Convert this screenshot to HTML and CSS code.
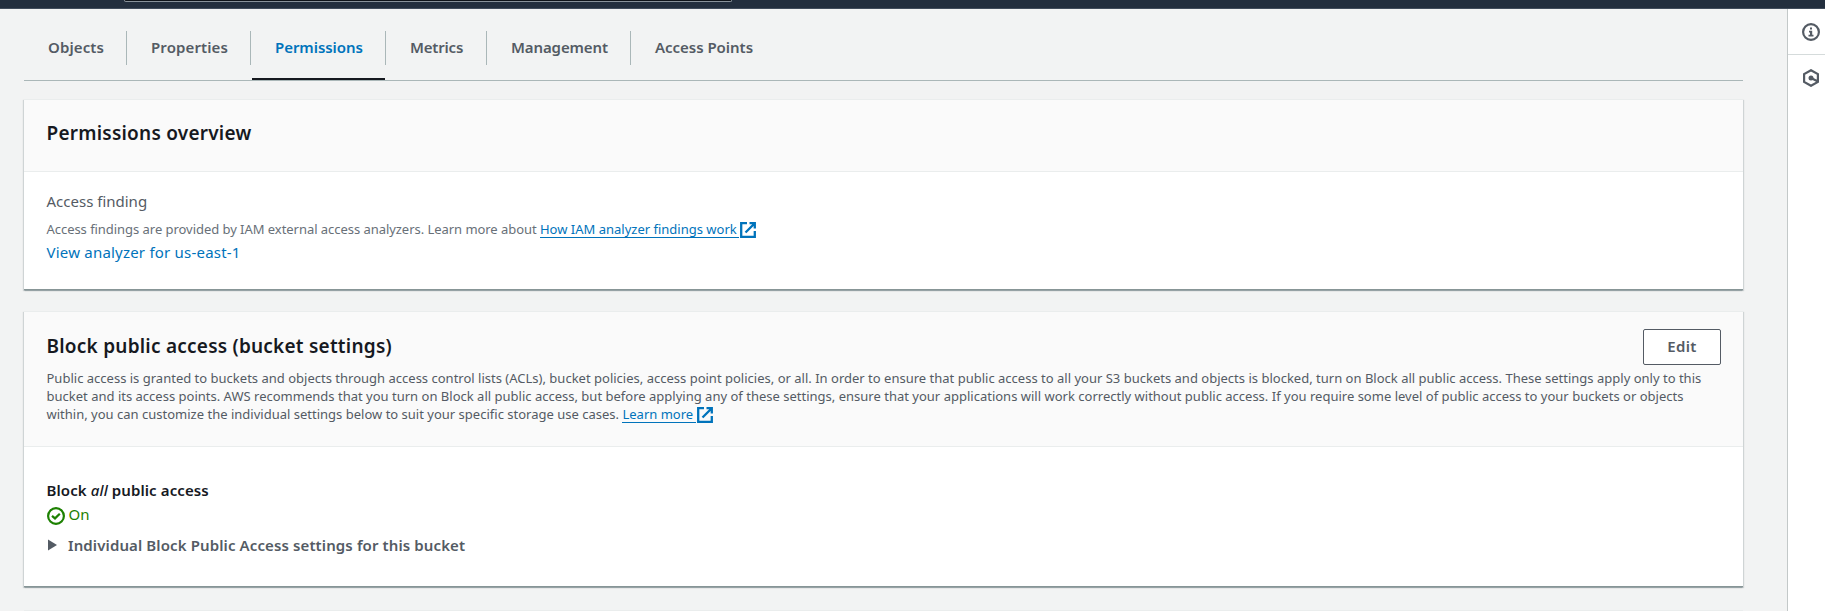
FILE: index.html
```html
<!DOCTYPE html>
<html lang="en">
<head>
<meta charset="utf-8">
<title>Bucket permissions</title>
<link rel="stylesheet" href="styles.css">
</head>
<body>
<header class="topbar"><div class="search"></div></header>
<div class="layout">
  <main class="content">
    <nav class="tabs">
      <a class="tab tab-objects"><span>Objects</span></a>
      <a class="tab tab-properties"><span>Properties</span></a>
      <a class="tab tab-permissions active"><span>Permissions</span></a>
      <a class="tab tab-metrics"><span>Metrics</span></a>
      <a class="tab tab-management"><span>Management</span></a>
      <a class="tab tab-points"><span>Access Points</span></a>
    </nav>

    <section class="card overview">
      <div class="card-header"><h2>Permissions overview</h2></div>
      <div class="card-body">
        <div class="label">Access finding</div>
        <p class="hint">Access findings are provided by IAM external access analyzers. Learn more about <a class="link">How IAM analyzer findings work <svg class="external" viewBox="0 0 16 16"><path d="M7 1.2H1.2v13.6h13.6V9M9.5 1.2h5.3v5.3M5.5 10.5l9-9"/></svg></a></p>
        <a class="plain-link">View analyzer for us-east-1</a>
      </div>
    </section>

    <section class="card block">
      <div class="card-header">
        <div class="heading-row">
          <h2>Block public access (bucket settings)</h2>
          <button class="button">Edit</button>
        </div>
        <p class="description">Public access is granted to buckets and objects through access control lists (ACLs), bucket policies, access point policies, or all. In order to ensure that public access to all your S3 buckets and objects is blocked, turn on Block all public access. These settings apply only to this<br>bucket and its access points. AWS recommends that you turn on Block all public access, but before applying any of these settings, ensure that your applications will work correctly without public access. If you require some level of public access to your buckets or objects<br>within, you can customize the individual settings below to suit your specific storage use cases. <a class="link">Learn more <svg class="external" viewBox="0 0 16 16"><path d="M7 1.2H1.2v13.6h13.6V9M9.5 1.2h5.3v5.3M5.5 10.5l9-9"/></svg></a></p>
      </div>
      <div class="card-body">
        <h3>Block <em>all</em> public access</h3>
        <div class="status">
          <svg class="check" viewBox="0 0 18 18"><circle cx="9" cy="9" r="7.9"/><path d="M5 8.8l3 2.6 4.8-4.6"/></svg>
          <span>On</span>
        </div>
        <div class="expander">
          <svg class="caret" viewBox="0 0 9 12"><path d="M0 .5v11L9 6z"/></svg>
          <span>Individual Block Public Access settings for this bucket</span>
        </div>
      </div>
    </section>

    <section class="card next"></section>
  </main>
  <aside class="tools">
    <div class="tool"><svg viewBox="0 0 18 18"><circle cx="9" cy="9" r="7.9"/><path class="fill" d="M8 4.6h2v2H8zM7 7.8h3.2v4h1.3v1.7h-5v-1.7H8V9.5H7z"/></svg></div>
    <div class="tool"><svg viewBox="0 0 18 18"><path d="M9 1.2l6.9 3.9v7.8L9 16.8l-6.9-3.9V5.1zM9 9l6.5 3.3"/><circle class="fill" cx="9" cy="9" r="2.5"/></svg></div>
  </aside>
</div>
</body>
</html>
```
FILE: styles.css
```css
* { box-sizing: border-box; }
body {
  margin: 0;
  height: 611px;
  overflow: hidden;
  display: flex;
  flex-direction: column;
  background: #f2f3f3;
  color: #16191f;
  font: 15px/22px "Noto Sans", sans-serif;
}
h2, h3, p { margin: 0; }

.topbar {
  height: 9px;
  flex: none;
  padding-left: 124px;
  background: #232f3e;
  border-bottom: 1px solid #414d5c;
}
.search {
  width: 608px;
  height: 2px;
  background: #0f141a;
  border: 1px solid #89939b;
  border-top: 0;
  border-radius: 0 0 2px 2px;
}

.layout { flex: 1; min-height: 0; display: flex; }
.content { flex: 1; padding: 0 44px 0 24px; }

.tabs {
  display: flex;
  height: 72px;
  padding-top: 22px;
  border-bottom: 1px solid #aab7b8;
}
.tab {
  position: relative;
  height: 34px;
  padding: 5px 0 0 24px;
  border-right: 1px solid #aab7b8;
  color: #545b64;
  font-weight: 600;
  white-space: nowrap;
}
.tab:last-child { border-right: 0; }
.tab-objects { width: 103px; letter-spacing: .11px; }
.tab-properties { width: 124px; letter-spacing: .11px; }
.tab-permissions { width: 135px; letter-spacing: -.05px; }
.tab-metrics { width: 101px; letter-spacing: -.2px; }
.tab-management { width: 144px; letter-spacing: -.11px; }
.tab-points { width: 146px; letter-spacing: -.03px; }
.tab.active { color: #0073bb; }
.tab.active::after {
  content: "";
  position: absolute;
  left: 1px;
  right: 0;
  top: 47px;
  height: 2px;
  background: #16191f;
}

.card {
  background: #fff;
  border-top: 1px solid #eaeded;
  border-bottom: 1px solid #879596;
  box-shadow: 0 1px 0 0 rgba(0, 28, 36, .15), 1px 1px 1px 0 rgba(0, 28, 36, .14), -1px 1px 1px 0 rgba(0, 28, 36, .14);
}
.card-header { background: #fafafa; border-bottom: 1px solid #eaeded; padding: 0 22px 0 22.5px; }
.card-body { padding: 0 22.5px; }
h2 { font-size: 19px; line-height: 28px; font-weight: 600; letter-spacing: .23px; }

.overview { height: 191px; margin-top: 18px; }
.overview .card-header { height: 72px; padding-top: 19px; }
.overview .card-body { padding-top: 18px; }
.label { color: #545b64; }
.hint {
  margin-top: 8px;
  color: #687078;
  font-size: 13px;
  line-height: 18px;
  letter-spacing: -.045px;
}
.link {
  display: inline-block;
  height: 18px;
  color: #0073bb;
  background: linear-gradient(#0073bb, #0073bb) left bottom / calc(100% - 17px) 1px no-repeat;
}
.hint .link { letter-spacing: 0; }
.external {
  width: 16px;
  height: 16px;
  vertical-align: -4px;
  fill: none;
  stroke: #0073bb;
  stroke-width: 2.3;
}
.plain-link { display: block; margin-top: 3px; color: #0073bb; letter-spacing: .21px; }

.block { height: 276px; margin-top: 21px; }
.block .card-header { height: 135px; padding-top: 17px; }
.heading-row { display: flex; justify-content: space-between; height: 40px; }
.heading-row h2 { padding-top: 3px; }
.button {
  width: 78px;
  height: 36px;
  padding: 0 0 3px;
  background: #fff;
  border: 1px solid #545b64;
  border-radius: 2px;
  color: #545b64;
  font: 600 15px/22px "Noto Sans", sans-serif;
  letter-spacing: .4px;
}
.description {
  color: #545b64;
  font-size: 13px;
  line-height: 18px;
  letter-spacing: .006px;
  white-space: nowrap;
}
.block .card-body { padding-top: 32px; }
h3 { font-size: 15px; line-height: 22px; font-weight: 600; letter-spacing: .1px; }
h3 em { font-weight: 500; }
.status { display: flex; gap: 4px; height: 24px; padding-top: 2px; color: #1d8102; }
.check { width: 18px; height: 18px; margin-top: 4px; fill: none; stroke: #1d8102; stroke-width: 2.2; }
.expander { display: flex; margin-top: 9px; color: #545b64; font-weight: 600; letter-spacing: .115px; }
.caret { width: 9px; height: 12px; margin: 5px 11px 0 1.5px; fill: #545b64; }
.next { height: 1px; margin-top: 23px; border-bottom: 0; box-shadow: none; }

.tools { width: 38px; background: #fff; border-left: 1px solid #c3c8c8; }
.tool { height: 46px; padding: 14px 0 0 14px; border-bottom: 1px solid #d5dbdb; }
.tool:last-child { border-bottom: 0; }
.tool svg { display: block; width: 18px; height: 18px; fill: none; stroke: #545b64; stroke-width: 2.2; }
.tool .fill { fill: #545b64; stroke: none; }
```
